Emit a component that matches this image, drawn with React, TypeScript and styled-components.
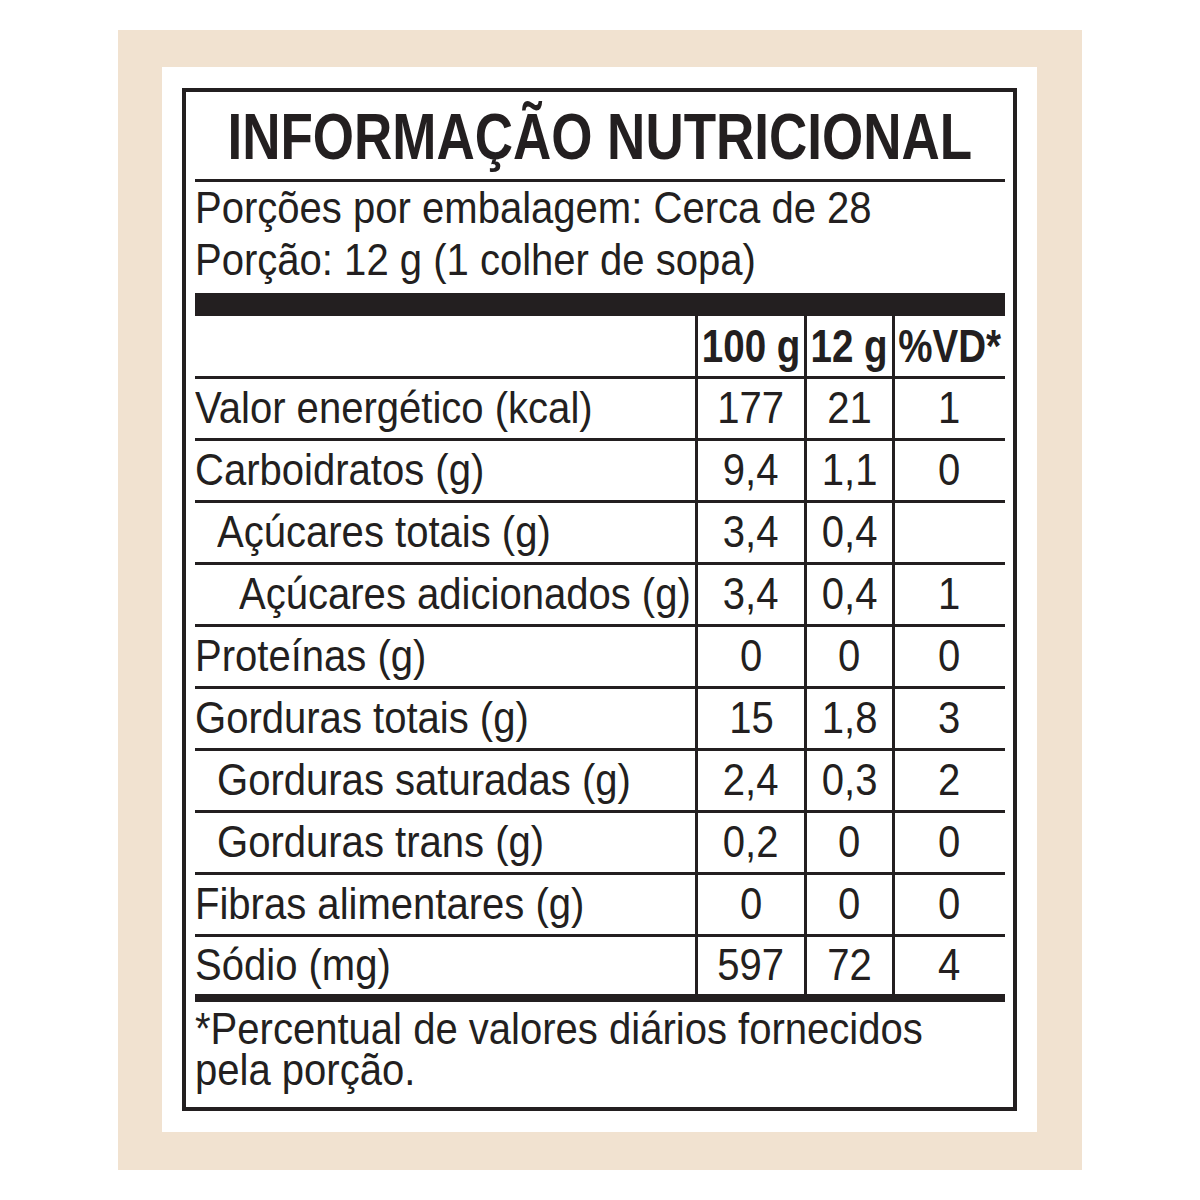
import styled, { createGlobalStyle } from 'styled-components'

interface INutrient {
  name: string,
  indent: number,
  per100: string,
  perPortion: string,
  vd: string
}

const nutrients: INutrient[] = [
  { name: 'Valor energético (kcal)', indent: 0, per100: '177', perPortion: '21', vd: '1' },
  { name: 'Carboidratos (g)', indent: 0, per100: '9,4', perPortion: '1,1', vd: '0' },
  { name: 'Açúcares totais (g)', indent: 1, per100: '3,4', perPortion: '0,4', vd: '' },
  { name: 'Açúcares adicionados (g)', indent: 2, per100: '3,4', perPortion: '0,4', vd: '1' },
  { name: 'Proteínas (g)', indent: 0, per100: '0', perPortion: '0', vd: '0' },
  { name: 'Gorduras totais (g)', indent: 0, per100: '15', perPortion: '1,8', vd: '3' },
  { name: 'Gorduras saturadas (g)', indent: 1, per100: '2,4', perPortion: '0,3', vd: '2' },
  { name: 'Gorduras trans (g)', indent: 1, per100: '0,2', perPortion: '0', vd: '0' },
  { name: 'Fibras alimentares (g)', indent: 0, per100: '0', perPortion: '0', vd: '0' },
  { name: 'Sódio (mg)', indent: 0, per100: '597', perPortion: '72', vd: '4' },
]

const body = 0.91

function App() {
  return (
    <>
      <GlobalStyle />
      <Page>
        <Frame>
          <Sheet>
            <Label>
              <Title>
                <Narrow $x={0.815} $origin="center">INFORMAÇÃO NUTRICIONAL</Narrow>
              </Title>
              <Serving>
                <div><Narrow $x={body}>Porções por embalagem: Cerca de 28</Narrow></div>
                <div><Narrow $x={body}>Porção: 12 g (1 colher de sopa)</Narrow></div>
              </Serving>
              <Bar $h={23} />
              <Row $h={63}>
                <NameCell />
                <HeadCell><Narrow $x={0.82} $origin="center">100 g</Narrow></HeadCell>
                <HeadCell><Narrow $x={0.82} $origin="center">12 g</Narrow></HeadCell>
                <HeadCell><Narrow $x={0.82} $origin="center">%VD*</Narrow></HeadCell>
              </Row>
              {nutrients.map((item, i) => {
                const last = i === nutrients.length - 1
                return (
                  <Row key={item.name} $h={last ? 57 : 62} $last={last}>
                    <NameCell $indent={item.indent}>
                      <Narrow $x={body}>{item.name}</Narrow>
                    </NameCell>
                    <Cell><Narrow $x={body} $origin="center">{item.per100}</Narrow></Cell>
                    <Cell><Narrow $x={body} $origin="center">{item.perPortion}</Narrow></Cell>
                    <Cell><Narrow $x={body} $origin="center">{item.vd}</Narrow></Cell>
                  </Row>
                )
              })}
              <Bar $h={8} />
              <Footnote>
                <Narrow $x={body}>*Percentual de valores diários fornecidos</Narrow>
                <br />
                <Narrow $x={body}>pela porção.</Narrow>
              </Footnote>
            </Label>
          </Sheet>
        </Frame>
      </Page>
    </>
  )
}

const ink = '#231f20'

const GlobalStyle = createGlobalStyle`
  body {
    margin: 0;
    background: #ffffff;
    font-family: "Liberation Sans", Arial, sans-serif;
    color: ${ink};
  }
`

const Page = styled.div`
  padding: 30px 0 0 118px;
`

const Frame = styled.div`
  width: 964px;
  height: 1140px;
  box-sizing: border-box;
  padding: 37px 45px 38px 44px;
  background: #f1e2d0;
`

const Sheet = styled.div`
  width: 875px;
  height: 1065px;
  box-sizing: border-box;
  padding: 21px 20px;
  background: #ffffff;
`

const Label = styled.div`
  height: 100%;
  box-sizing: border-box;
  border: 4px solid ${ink};
  padding: 0 8px 0 9px;
  display: flex;
  flex-direction: column;
`

// the label is set in a condensed Helvetica; squeeze Liberation Sans to match
const Narrow = styled.span<{ $x: number, $origin?: string }>`
  display: inline-block;
  white-space: nowrap;
  transform: scaleX(${(p) => p.$x});
  transform-origin: ${(p) => p.$origin ?? 'left'} center;
`

const Title = styled.h1`
  margin: 0;
  padding-top: 3px;
  height: 84px;
  line-height: 84px;
  border-bottom: 3px solid ${ink};
  display: flex;
  justify-content: center;
  font-weight: 700;
  font-size: 65px;
  flex-shrink: 0;
`

const Serving = styled.div`
  padding-bottom: 7px;
  font-size: 44px;
  line-height: 52px;
`

const Bar = styled.div<{ $h: number }>`
  height: ${(p) => p.$h}px;
  background: ${ink};
  flex-shrink: 0;
`

const Row = styled.div<{ $h: number, $last?: boolean }>`
  display: grid;
  grid-template-columns: 500px 109px 88px 112px;
  height: ${(p) => p.$h}px;
  box-sizing: border-box;
  border-bottom: ${(p) => (p.$last ? 'none' : `3px solid ${ink}`)};
  font-size: 44px;
  flex-shrink: 0;
`

const NameCell = styled.div<{ $indent?: number }>`
  display: flex;
  align-items: center;
  padding-left: ${(p) => (p.$indent ?? 0) * 22}px;
  padding-bottom: 2px;
  white-space: nowrap;
`

const Cell = styled.div`
  display: flex;
  align-items: center;
  justify-content: center;
  border-left: 3px solid ${ink};
  padding-bottom: 2px;
  min-width: 0;
`

const HeadCell = styled(Cell)`
  font-weight: 700;
  font-size: 47px;
`

const Footnote = styled.div`
  padding-top: 6px;
  font-size: 44px;
  line-height: 41px;
`

export default App
